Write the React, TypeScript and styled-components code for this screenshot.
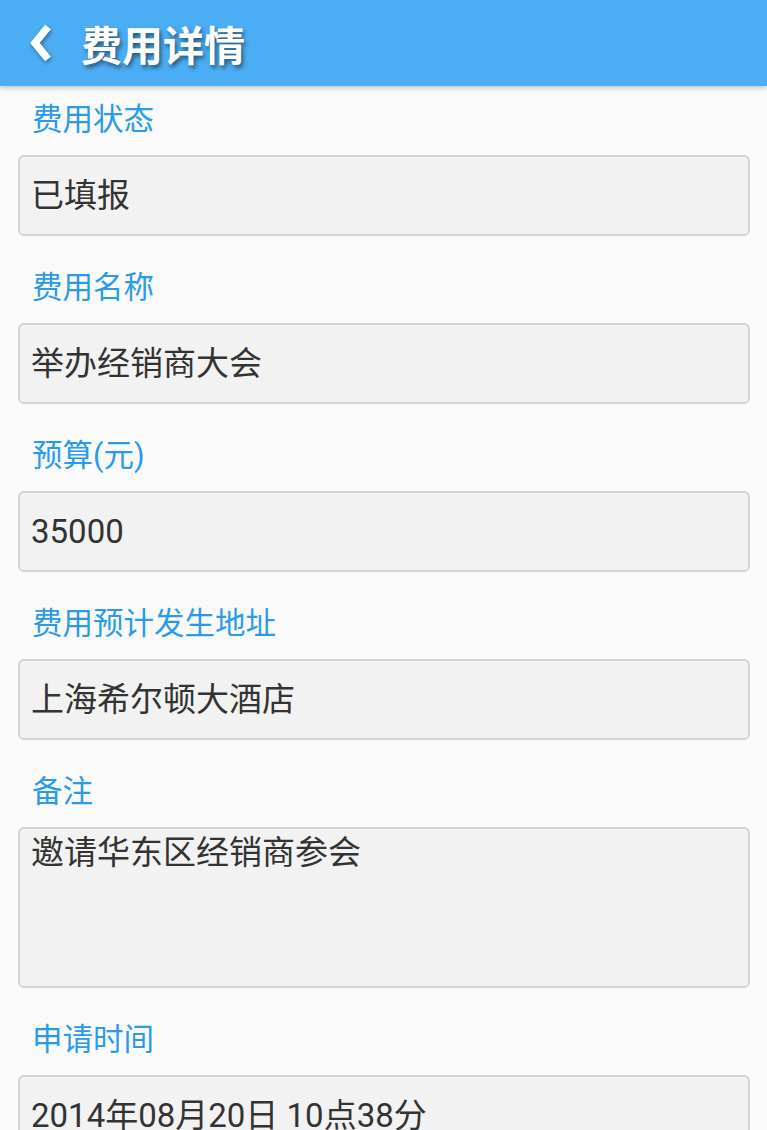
import React from "react";
import styled, { createGlobalStyle } from "styled-components";

const GlobalStyle = createGlobalStyle`
  html, body {
    margin: 0;
    padding: 0;
    overflow: hidden;
    background: #fafafa;
  }
  * { box-sizing: border-box; }
`;

const Page = styled.div`
  height: 100vh;
  overflow: hidden;
  background: #fafafa;
  font-family: Roboto, "Noto Sans CJK SC", sans-serif;
`;

const Header = styled.header`
  position: relative;
  z-index: 1;
  height: 86px;
  background: #4baef5;
  display: flex;
  align-items: center;
  padding-left: 25px;
  box-shadow: 0 2px 5px rgba(0, 0, 0, 0.22);
`;

const BackButton = styled.button`
  border: 0;
  background: none;
  padding: 0;
  width: 30px;
  height: 40px;
  display: flex;
  align-items: center;
  justify-content: center;
  margin-right: 26px;
  filter: drop-shadow(1px 2px 2px rgba(0, 0, 0, 0.4));
`;

const Title = styled.h1`
  margin: 0;
  color: #ffffff;
  font-family: "Noto Sans CJK SC", sans-serif;
  font-weight: 700;
  font-size: 41px;
  line-height: 50px;
  text-shadow: 2px 3px 4px rgba(0, 0, 0, 0.5);
`;

const Content = styled.main`
  padding: 14px 17px 0 18px;
`;

const Field = styled.section`
  & + & {
    margin-top: 32px;
  }
`;

const Label = styled.div`
  height: 40px;
  line-height: 40px;
  padding-left: 14px;
  margin-bottom: 15px;
  color: #2a9be9;
  font-size: 30.5px;
  font-family: Roboto, "Noto Sans CJK SC", sans-serif;
`;

const Box = styled.div<{ $multi?: boolean }>`
  height: ${(p) => (p.$multi ? "161px" : "81px")};
  background: #f2f2f2;
  border: 2px solid #d4d4d4;
  border-radius: 6px;
  padding: ${(p) => (p.$multi ? "4px 11px 0" : "0 11px")};
  display: flex;
  align-items: ${(p) => (p.$multi ? "flex-start" : "center")};
  color: #333333;
  font-size: 33px;
  line-height: 40px;
  white-space: nowrap;
`;

const fields: { label: string; value: string; multi?: boolean }[] = [
  { label: "费用状态", value: "已填报" },
  { label: "费用名称", value: "举办经销商大会" },
  { label: "预算(元)", value: "35000" },
  { label: "费用预计发生地址", value: "上海希尔顿大酒店" },
  { label: "备注", value: "邀请华东区经销商参会", multi: true },
  { label: "申请时间", value: "2014年08月20日 10点38分" },
];

export default function App() {
  return (
    <Page>
      <GlobalStyle />
      <Header>
        <BackButton aria-label="返回">
          <svg width="28" height="40" viewBox="0 0 28 40">
            <path
              d="M22 4 L9 20 L22 36"
              fill="none"
              stroke="#ffffff"
              strokeWidth="7.5"
              strokeLinejoin="miter"
            />
          </svg>
        </BackButton>
        <Title>费用详情</Title>
      </Header>
      <Content>
        {fields.map((f) => (
          <Field key={f.label}>
            <Label>{f.label}</Label>
            <Box $multi={f.multi}>{f.value}</Box>
          </Field>
        ))}
      </Content>
    </Page>
  );
}
